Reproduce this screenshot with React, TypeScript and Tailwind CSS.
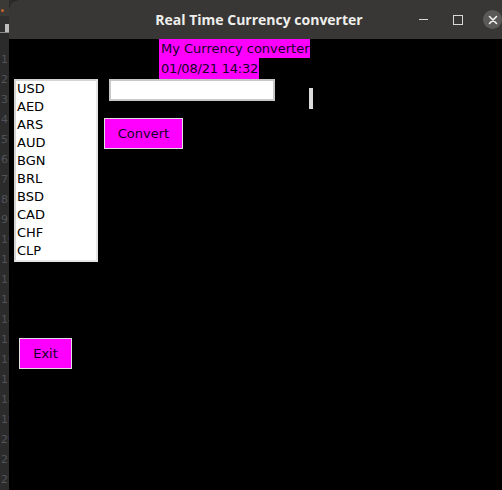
import React from "react";

const currencies = ["USD", "AED", "ARS", "AUD", "BGN", "BRL", "BSD", "CAD", "CHF", "CLP"];
const lineNums = Array.from({ length: 22 }, (_, i) => i + 1);

export default function App() {
  return (
    <div className="flex h-[490px] w-[502px] overflow-hidden bg-[#2b2b2b]" style={{ fontFamily: '"DejaVu Sans", sans-serif' }}>
      {/* background editor strip */}
      <div className="flex w-[9px] shrink-0 flex-col overflow-hidden">
        <div className="h-[28px] bg-[#3c3a36]">
          <div className="ml-[1px] mt-[9px] h-[3px] w-[3px] rounded-full bg-[#c8602a]" />
        </div>
        <div className="h-[20px] bg-[#2f2f2f]">
          <div className="ml-[5px] mt-[8px] h-[8px] w-[4px] bg-[#bdbdbd]" />
        </div>
        <div className="h-[2px] bg-[#8a8a8a]" />
        <div className="flex flex-col pt-[17px] text-[11px] leading-[20px] text-[#4f5357]">
          {lineNums.map((n) => (
            <div key={n} className="whitespace-nowrap pl-[1px]">
              {n}
            </div>
          ))}
        </div>
      </div>

      {/* window */}
      <div className="flex flex-1 flex-col overflow-hidden rounded-tl-[9px] bg-black">
        <div className="flex h-[39px] shrink-0 items-center bg-[#393735]">
          <div
            className="ml-[145px] w-[210px] whitespace-nowrap text-center text-[14px] font-bold text-[#eeeeec]"
            style={{ fontFamily: '"Open Sans", "Noto Sans", sans-serif' }}
          >
            Real Time Currency converter
          </div>
          <div className="ml-[55px] h-[1px] w-[9px] bg-[#d8d8d8]" />
          <div className="ml-[25px] h-[10px] w-[10px] border border-[#d8d8d8]" />
          <div className="ml-[20px] flex h-[19px] w-[19px] items-center justify-center rounded-full bg-[#5b5957]">
            <svg width="10" height="10" viewBox="0 0 10 10">
              <path d="M1.5 1.5 L8.5 8.5 M8.5 1.5 L1.5 8.5" stroke="#f2f2f2" strokeWidth="1.6" strokeLinecap="round" />
            </svg>
          </div>
        </div>

        <div className="flex flex-col text-[13px] text-[#140028]">
          <div className="ml-[150px] flex h-[19px] w-[151px] items-center bg-[#ff00ff] pl-[2px] whitespace-nowrap">
            My Currency converter
          </div>
          <div className="ml-[150px] flex h-[21px] w-[100px] items-center bg-[#ff00ff] pl-[2px] whitespace-nowrap tracking-[-0.2px]">
            01/08/21 14:32
          </div>

          <div className="flex">
            <div className="flex flex-col">
              <div className="ml-[5px] h-[183px] w-[84px] overflow-hidden border-2 border-[#d4d4d4] border-r-[#e6e6e6] border-b-[#e6e6e6] bg-white text-black">
                <div className="-mt-[1px] pl-[1px] leading-[18px]">
                  {currencies.map((c) => (
                    <div key={c}>{c}</div>
                  ))}
                </div>
              </div>
              <div className="ml-[10px] mt-[76px] flex h-[31px] w-[53px] items-center justify-center border border-[#e0e0e0] bg-[#ff00ff]">
                Exit
              </div>
            </div>

            <div className="flex flex-col">
              <div className="flex items-start">
                <div className="ml-[11px] h-[22px] w-[166px] border-2 border-[#c8c8c8] bg-white" />
                <div className="ml-[34px] mt-[9px] h-[21px] w-[4px] bg-[#dcdcdc]" />
              </div>
              <div className="ml-[6px] mt-[9px] flex h-[31px] w-[79px] items-center justify-center border border-[#e0e0e0] bg-[#ff00ff]">
                Convert
              </div>
            </div>
          </div>
        </div>
      </div>
    </div>
  );
}
